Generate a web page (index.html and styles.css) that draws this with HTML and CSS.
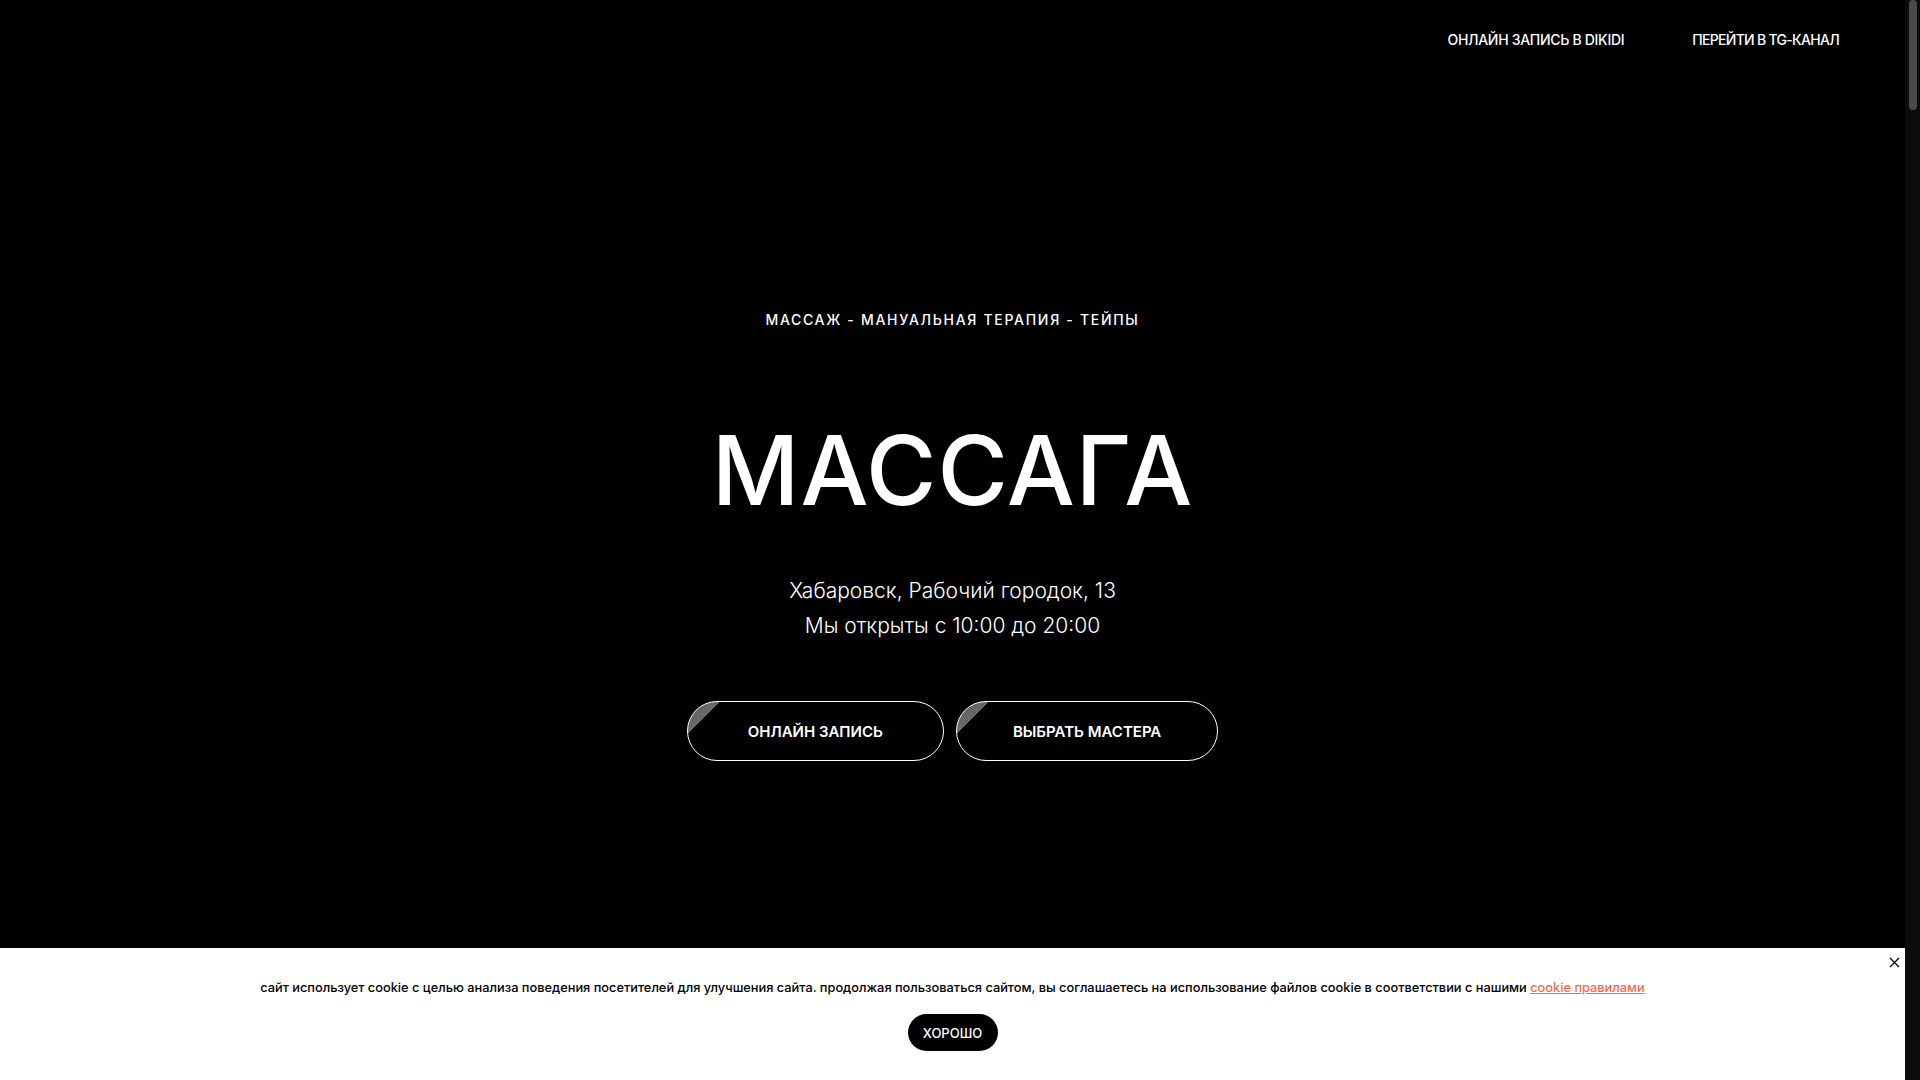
FILE: index.html
```html
<!DOCTYPE html>
<html lang="ru">
<head>
	<meta charset="UTF-8">
	<title>МАССАГА</title>
	<meta name="viewport" content="width=device-width,initial-scale=1">
	<link rel="stylesheet" href="styles.css">
</head>
<body>
	<div class="page-top">
		<header class="header">
			<nav class="nav">
				<a href="#">ОНЛАЙН ЗАПИСЬ В DIKIDI</a>
				<a class="tg" href="#">ПЕРЕЙТИ В TG-КАНАЛ</a>
			</nav>
		</header>
		<section class="hero">
			<div class="hero-sub">МАССАЖ - МАНУАЛЬНАЯ ТЕРАПИЯ - ТЕЙПЫ</div>
			<h1 class="hero-title">МАССАГА</h1>
			<div class="hero-addr">
				<p>Хабаровск, Рабочий городок, 13</p>
				<p>Мы открыты с 10:00 до 20:00</p>
			</div>
			<div class="hero-btns">
				<a class="btn" href="#">ОНЛАЙН ЗАПИСЬ</a>
				<a class="btn" href="#">ВЫБРАТЬ МАСТЕРА</a>
			</div>
		</section>
	</div>

	<!-- полоса прокрутки как в браузере -->
	<div class="scrollbar"><div class="scrollbar-thumb"></div></div>

	<div class="cookie">
		<button class="cookie-close" aria-label="закрыть">
			<svg width="11" height="11" viewBox="0 0 11 11"><path d="M1 1L10 10M10 1L1 10" stroke="#000" stroke-width="1.3"/></svg>
		</button>
		<p class="cookie-text">сайт использует cookie с целью анализа поведения посетителей для улучшения сайта. продолжая пользоваться сайтом, вы соглашаетесь на использование файлов cookie в соответствии с нашими <a href="#">cookie правилами</a></p>
		<button class="cookie-ok">ХОРОШО</button>
	</div>
</body>
</html>
```

FILE: styles.css
```css
*{
	padding:0;
	margin:0;
	box-sizing:border-box;
}
html,body{
	overflow:hidden;
}
body{
	background-color:#000;
	color:#fff;
	font-family:"Inter","Noto Sans",sans-serif;
}
a{
	color:inherit;
	text-decoration:none;
}
.page-top{
	height:100vh;
	margin-right:15px;
	display:flex;
	flex-direction:column;
}
.header{
	height:78px;
	display:flex;
	align-items:center;
	justify-content:flex-end;
	padding-right:66px;
}
.header .nav{
	display:flex;
	gap:68px;
}
.header .nav a{
	font-size:14px;
	font-weight:500;
	letter-spacing:-0.3px;
}
.header .nav a.tg{
	letter-spacing:-0.7px;
}
.hero{
	flex:1;
	display:flex;
	flex-direction:column;
	align-items:center;
	padding-top:230px;
}
.hero-sub{
	font-size:14px;
	font-weight:500;
	letter-spacing:1.7px;
	line-height:24px;
}
.hero-title{
	margin-top:78px;
	font-size:96px;
	font-weight:500;
	line-height:120px;
	letter-spacing:1px;
}
.hero-addr{
	margin-top:43px;
	font-size:21px;
	font-weight:300;
	line-height:35px;
	text-align:center;
}
.hero-btns{
	margin-top:58px;
	display:flex;
	gap:12px;
}
.btn{
	height:60px;
	padding:0 60px;
	display:flex;
	align-items:center;
	border:1px solid #fff;
	border-radius:30px;
	font-size:15px;
	font-weight:600;
	background:linear-gradient(135deg,#5a5a5a 0,#6a6a6a 22px,transparent 22px);
}
.btn + .btn{
	padding:0 56px;
}
.scrollbar{
	position:fixed;
	top:0;
	right:0;
	width:15px;
	height:100vh;
	background-color:#0c0c0c;
}
.scrollbar-thumb{
	margin:0 auto;
	width:8px;
	height:110px;
	border-radius:4px;
	background-color:#4a4a4a;
}
.cookie{
	position:fixed;
	left:0;
	right:15px;
	bottom:0;
	height:132px;
	background-color:#fff;
	color:#000;
	display:flex;
	flex-direction:column;
	align-items:center;
	padding-top:30px;
}
.cookie-text{
	font-size:12.8px;
	font-weight:500;
	line-height:20px;
}
.cookie-text a{
	color:#f26c4f;
	text-decoration:underline;
}
.cookie-ok{
	margin-top:16px;
	height:37px;
	width:90px;
	border:none;
	border-radius:19px;
	background-color:#000;
	color:#fff;
	font-family:inherit;
	font-size:13px;
	font-weight:500;
}
.cookie-close{
	position:absolute;
	top:3px;
	right:0;
	width:22px;
	height:22px;
	border:none;
	background:none;
	display:flex;
	align-items:center;
	justify-content:center;
}
```
